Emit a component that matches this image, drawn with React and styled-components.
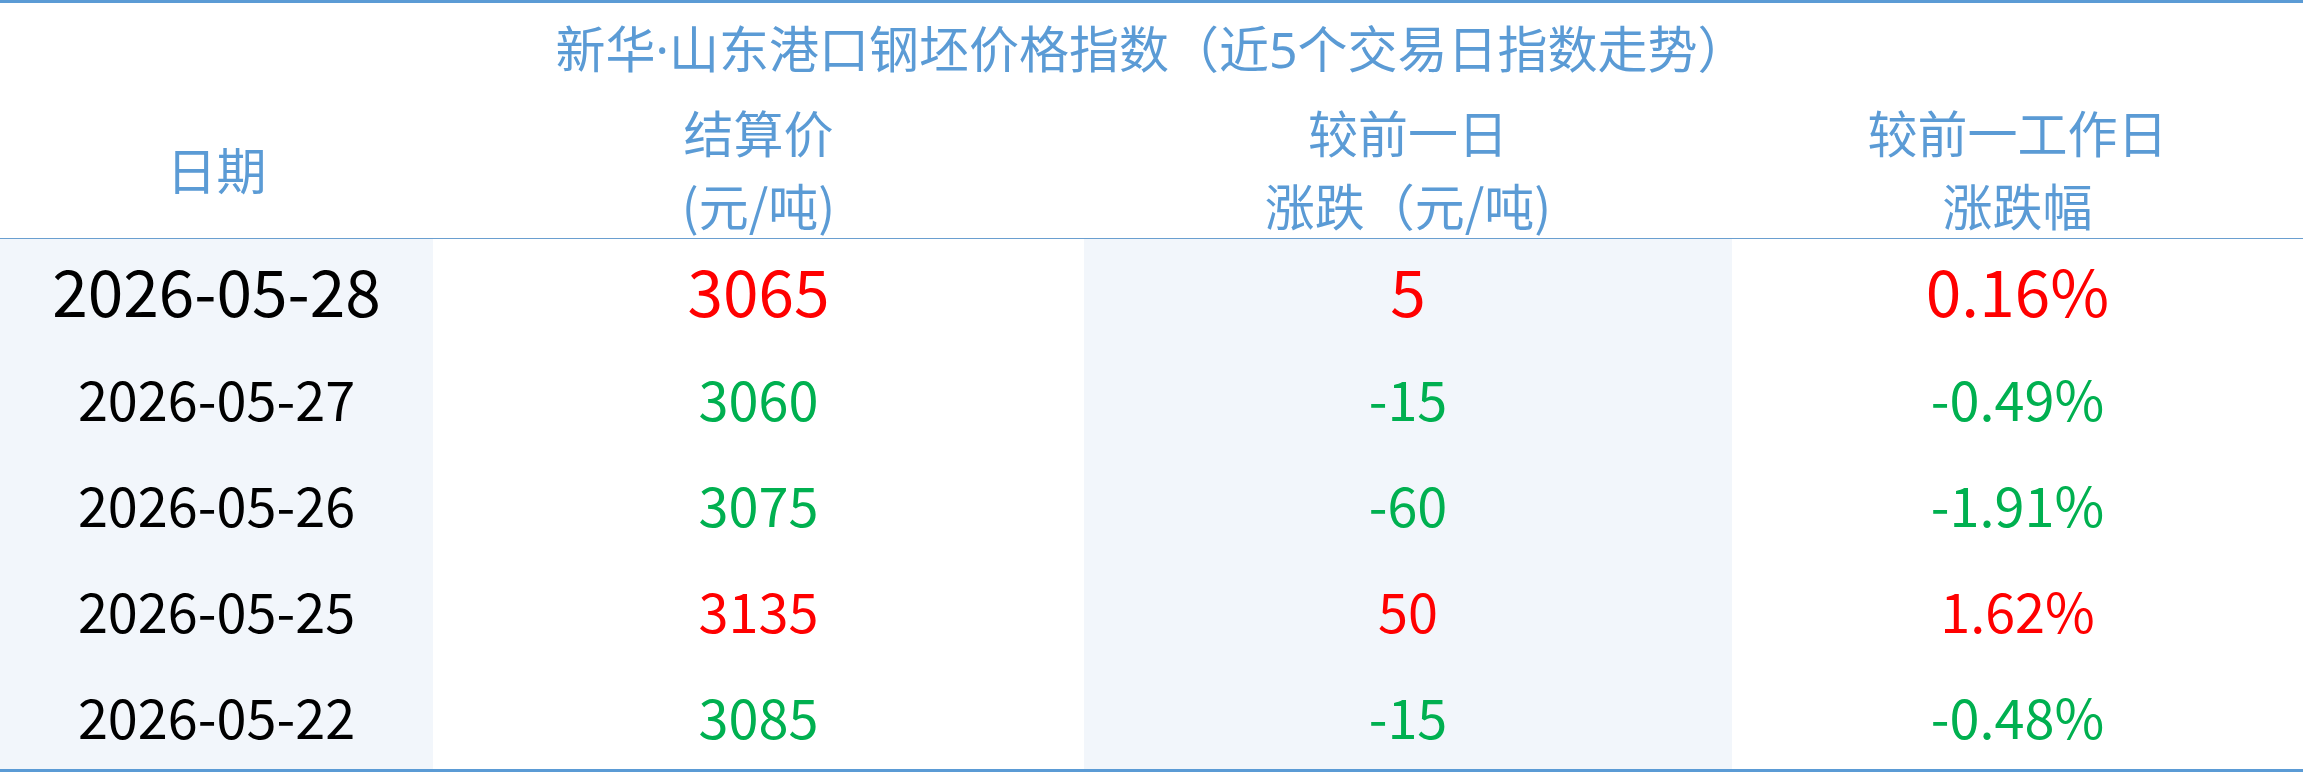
import styled, { createGlobalStyle } from "styled-components";

const GlobalStyle = createGlobalStyle`
    html, body {
        margin: 0;
        padding: 0;
        background: #fff;
    }
    body {
        font-family: "Noto Sans CJK SC", "Noto Sans", sans-serif;
    }
`;

const rows = [
    { date: '2026-05-28', price: '3065', diff: '5', pct: '0.16%', up: true },
    { date: '2026-05-27', price: '3060', diff: '-15', pct: '-0.49%', up: false },
    { date: '2026-05-26', price: '3075', diff: '-60', pct: '-1.91%', up: false },
    { date: '2026-05-25', price: '3135', diff: '50', pct: '1.62%', up: true },
    { date: '2026-05-22', price: '3085', diff: '-15', pct: '-0.48%', up: false },
];

export default function App() {
    return (
        <>
            <GlobalStyle />
            <TableSC>
                <TitleSC>新华·山东港口钢坯价格指数（近5个交易日指数走势）</TitleSC>
                <HeadRowSC>
                    <HeadCellSC>日期</HeadCellSC>
                    <HeadCellSC>结算价<br />(元/吨)</HeadCellSC>
                    <HeadCellSC>较前一日<br />涨跌（元/吨)</HeadCellSC>
                    <HeadCellSC>较前一工作日<br />涨跌幅</HeadCellSC>
                </HeadRowSC>
                {rows.map((r, i) => (
                    <RowSC key={r.date}>
                        <CellSC $striped $big={i === 0}>{r.date}</CellSC>
                        <CellSC $big={i === 0} $color={r.up ? '#ff0000' : '#00b050'}>{r.price}</CellSC>
                        <CellSC $striped $big={i === 0} $color={r.up ? '#ff0000' : '#00b050'}>{r.diff}</CellSC>
                        <CellSC $big={i === 0} $color={r.up ? '#ff0000' : '#00b050'}>{r.pct}</CellSC>
                    </RowSC>
                ))}
            </TableSC>
        </>
    );
}

const TableSC = styled.div`
    width: 2303px;
    border-top: 3px solid #5b9bd5;
    border-bottom: 3px solid #5b9bd5;
    box-sizing: border-box;
`;

const TitleSC = styled.div`
    height: 92px;
    box-sizing: border-box;
    padding-bottom: 6px;
    display: flex;
    align-items: center;
    justify-content: center;
    color: #5b9bd5;
    font-family: "Noto Sans", "Noto Sans CJK SC", sans-serif;
    font-size: 50px;
    white-space: nowrap;
`;

const columns = `433px 651px 648px 1fr`;

const HeadRowSC = styled.div`
    display: grid;
    grid-template-columns: ${columns};
    height: 143px;
    border-bottom: 1px solid #6a9fd0;
`;

const HeadCellSC = styled.div`
    display: flex;
    align-items: center;
    justify-content: center;
    padding-bottom: 7px;
    text-align: center;
    color: #5b9bd5;
    font-size: 50px;
    line-height: 73px;
`;

const RowSC = styled.div`
    display: grid;
    grid-template-columns: ${columns};
    height: 106px;
`;

const CellSC = styled.div`
    display: flex;
    align-items: center;
    justify-content: center;
    padding-bottom: ${props => props.$big ? '6px' : '2px'};
    background: ${props => props.$striped ? '#f2f6fb' : '#fff'};
    color: ${props => props.$color || '#000'};
    font-size: ${props => props.$big ? '64px' : '54px'};
`;
